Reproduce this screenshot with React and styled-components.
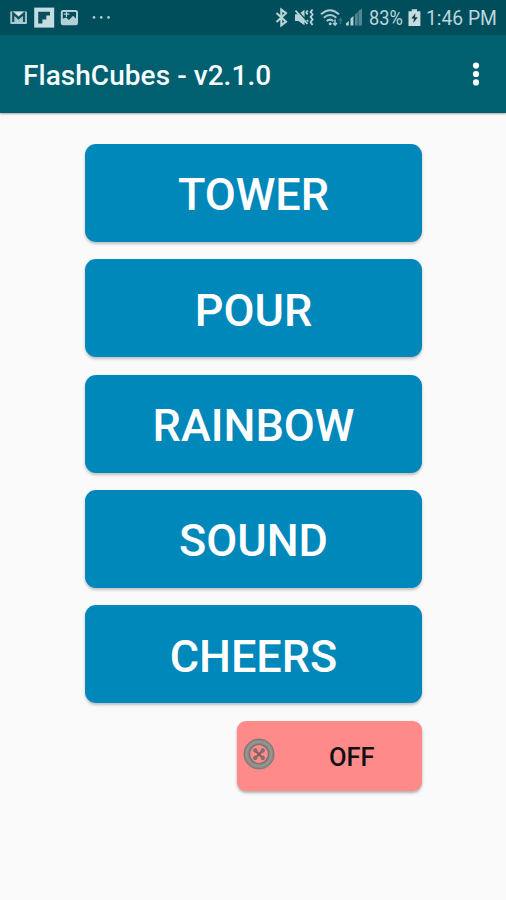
import React from "react";
import styled, { createGlobalStyle } from "styled-components";

const GlobalStyle = createGlobalStyle`
  * { box-sizing: border-box; }
  body { margin: 0; background: #fafafa; font-family: Roboto, sans-serif; }
  button { font-family: inherit; border: 0; padding: 0; cursor: pointer; }
`;

const Screen = styled.div`
  width: 506px;
  height: 900px;
  display: flex;
  flex-direction: column;
  background: #fafafa;
  overflow: hidden;
`;

const StatusBar = styled.header`
  height: 35px;
  flex: none;
  display: flex;
  align-items: center;
  justify-content: space-between;
  padding: 0 11px 0 10px;
  background: #004e5c;
  color: #bcd6db;
`;

const StatusIcons = styled.svg`
  display: block;
  flex: none;
`;

const StatusGroup = styled.div`
  display: flex;
  align-items: center;
  height: 35px;
`;

const StatusText = styled.span`
  font-size: 20.5px;
  line-height: 35px;
  width: ${(p) => p.$width}px;
  margin-left: ${(p) => p.$gap}px;
  white-space: nowrap;
  padding-top: 1px;
  transform: scaleX(${(p) => p.$condense});
  transform-origin: left center;
`;

const AppBar = styled.div`
  height: 78px;
  flex: none;
  display: flex;
  align-items: center;
  justify-content: space-between;
  padding: 2px 20px 0 23px;
  background: #00606f;
  box-shadow: 0 1px 2px rgba(0, 0, 0, 0.35);
`;

const Title = styled.h1`
  margin: 2px 0 0;
  font-size: 28px;
  font-weight: 500;
  line-height: 36px;
  letter-spacing: 0.05px;
  color: #f4fbfc;
  white-space: nowrap;
`;

const MenuButton = styled.button`
  width: 20px;
  height: 40px;
  display: grid;
  place-items: center;
  background: transparent;
  margin-top: -3px;
`;

const Content = styled.main`
  width: 337px;
  margin: 31px 0 0 85px;
  display: flex;
  flex-direction: column;
  gap: 17.35px;
`;

const ModeButton = styled.button`
  height: 98px;
  flex: none;
  border-radius: 11px;
  background: #0088bb;
  color: #fff;
  font-size: 45px;
  font-weight: 500;
  line-height: 98px;
  padding-top: 2.4px;
  box-shadow: 0 2px 3px rgba(0, 0, 0, 0.24);
`;

const PowerButton = styled.button`
  align-self: flex-end;
  width: 185px;
  height: 70.5px;
  display: flex;
  align-items: center;
  border-radius: 9px;
  background: #ff8a8a;
  color: #111;
  padding-left: 6px;
  box-shadow: 0 2px 3px rgba(0, 0, 0, 0.3);
`;

const KnobIcon = styled.svg`
  flex: none;
  margin-bottom: 4px;
`;

const PowerLabel = styled.span`
  margin: 2px 0 0 54px;
  font-size: 25.5px;
  font-weight: 500;
  line-height: 30px;
`;

const MODES = ["TOWER", "POUR", "RAINBOW", "SOUND", "CHEERS"];

function NotificationIcons() {
  return (
    <StatusIcons width="104" height="35" viewBox="10 0 104 35">
      <rect x="10.3" y="11.3" width="16.6" height="12.8" rx="1.2" fill="#a9c9cf" />
      <path d="M13.2 22V13.5L18.6 18.2L24 13.5V22" fill="none" stroke="#12525e" strokeWidth="2.2" />
      <path d="M14.5 12.3H22.7L18.6 15.7Z" fill="#d6e6e9" />
      <rect x="34.2" y="7.6" width="20" height="20" fill="#c4dde2" />
      <path d="M38.2 11.8H50V15.6H46.3V19.5H42.4V23.4H38.2Z" fill="#0c4f5a" />
      <rect x="61.8" y="11" width="15.2" height="13.2" rx="1.2" fill="none" stroke="#b3d0d6" strokeWidth="2" />
      <path d="M62 22V19L66 17.5L69 20L73 15.8L77 19.5V24H62Z" fill="#b3d0d6" />
      <path d="M66.5 11.5V17M63.8 14.2H69.4" stroke="#b3d0d6" strokeWidth="1.3" />
      <circle cx="94" cy="17.4" r="1.35" fill="#a9cbd2" />
      <circle cx="101.2" cy="17.4" r="1.35" fill="#a9cbd2" />
      <circle cx="108.5" cy="17.4" r="1.35" fill="#a9cbd2" />
    </StatusIcons>
  );
}

function ConnectionIcons() {
  return (
    <StatusIcons width="89" height="35" viewBox="275 0 89 35">
      <path d="M276.5 13L286 21.6L281.3 25.3V9.7L286 13.2L276.5 22" fill="none" stroke="#b8d3d8" strokeWidth="2.1" />
      <path d="M295 14.3H298.5L304.5 9.8V25.2L298.5 21H295Z" fill="#b8d3d8" />
      <path d="M296.8 9.8L307.8 22" stroke="#004e5c" strokeWidth="1.3" />
      <path d="M295.5 10.7L307.5 24" stroke="#b8d3d8" strokeWidth="1.8" />
      <path d="M307.6 10.5L306.4 12.5L307.6 14.5M307 20L308 21.5M312.6 9.5L310.6 12L312.6 14.5L310.6 17L312.6 19.5L310.6 22L312.6 25" fill="none" stroke="#b8d3d8" strokeWidth="1.9" />
      <g fill="none" stroke="#a9cad0" strokeWidth="2">
        <path d="M321 14.2Q330 6.2 339 14.2" />
        <path d="M323.8 17.7Q330 12.4 336.3 17.7" />
        <path d="M326.6 21Q330 18.2 333.4 21" />
      </g>
      <circle cx="330.2" cy="23.8" r="1.5" fill="#a9cad0" />
      <path d="M335 19.5V25M333 23L335 25.2L337 23" fill="none" stroke="#a9cad0" strokeWidth="1.5" />
      <path d="M340.5 24V18.5M338.8 20.5L340.5 18.5L342.2 20.5" fill="none" stroke="#386f7a" strokeWidth="1.4" />
      <path d="M346 25.6V23.2L348.8 21V25.6ZM350.5 25.6V18.5L353.4 16V25.6Z" fill="#b4d0d5" />
      <path d="M355 25.6V14.5L357.8 12V25.6ZM358.5 25.6V11L362 8.5V25.6Z" fill="#538791" />
    </StatusIcons>
  );
}

function BatteryIcon() {
  return (
    <StatusIcons width="13" height="35" viewBox="408 0 13 35">
      <path d="M411.8 9.2H417V11.2H420.4V26H408.5V11.2H411.8Z" fill="#c7dce0" />
      <path d="M415.5 13.2L411.2 18.5H413.9L413.3 23L417.8 17.2H415Z" fill="#123f48" />
    </StatusIcons>
  );
}

function MoreIcon() {
  return (
    <svg width="10" height="26" viewBox="0 0 10 26">
      <circle cx="5" cy="4.6" r="3.1" fill="#fff" />
      <circle cx="5" cy="13" r="3.1" fill="#fff" />
      <circle cx="5" cy="21.4" r="3.1" fill="#fff" />
    </svg>
  );
}

function ButtonIcon() {
  return (
    <KnobIcon width="32" height="32" viewBox="0 0 32 32">
      <circle cx="16" cy="16" r="12.3" fill="none" stroke="#8b8986" strokeWidth="6" />
      <circle cx="16" cy="16" r="15" fill="none" stroke="#7b7977" strokeWidth="1" />
      <circle cx="16" cy="16" r="12.3" fill="none" stroke="#9b9794" strokeWidth="1.5" />
      <circle cx="16" cy="16" r="9.5" fill="none" stroke="#77716f" strokeWidth="1.2" />
      <path d="M12.2 12.5L19.8 20M19.8 12.5L12.2 20" stroke="#7d5c5c" strokeWidth="1.8" />
      <g fill="#a96d6c" stroke="#756f6e" strokeWidth="1.3">
        <circle cx="12.2" cy="12.5" r="1.5" />
        <circle cx="19.8" cy="12.5" r="1.5" />
        <circle cx="12.2" cy="20" r="1.5" />
        <circle cx="19.8" cy="20" r="1.5" />
      </g>
    </KnobIcon>
  );
}

export default function App() {
  return (
    <>
      <GlobalStyle />
      <Screen>
        <StatusBar>
          <NotificationIcons />
          <StatusGroup>
            <ConnectionIcons />
            <StatusText $width={39} $gap={5} $condense={0.89}>83%</StatusText>
            <BatteryIcon />
            <StatusText $width={69} $gap={5} $condense={0.94}>1:46 PM</StatusText>
          </StatusGroup>
        </StatusBar>
        <AppBar>
          <Title>FlashCubes - v2.1.0</Title>
          <MenuButton aria-label="More options">
            <MoreIcon />
          </MenuButton>
        </AppBar>
        <Content>
          {MODES.map((mode) => (
            <ModeButton key={mode}>{mode}</ModeButton>
          ))}
          <PowerButton>
            <ButtonIcon />
            <PowerLabel>OFF</PowerLabel>
          </PowerButton>
        </Content>
      </Screen>
    </>
  );
}
